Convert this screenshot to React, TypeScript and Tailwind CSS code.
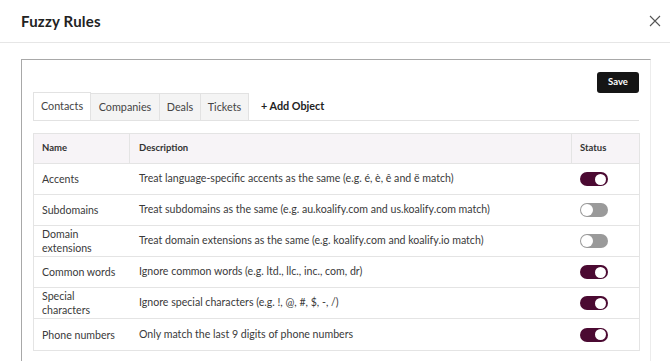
import React from "react";

const rows = [
  { name: "Accents", desc: "Treat language-specific accents as the same (e.g. é, è, ê and ë match)", on: true },
  { name: "Subdomains", desc: "Treat subdomains as the same (e.g. au.koalify.com and us.koalify.com match)", on: false },
  { name: "Domain extensions", desc: "Treat domain extensions as the same (e.g. koalify.com and koalify.io match)", on: false },
  { name: "Common words", desc: "Ignore common words (e.g. ltd., llc., inc., com, dr)", on: true },
  { name: "Special characters", desc: "Ignore special characters (e.g. !, @, #, $, -, /)", on: true },
  { name: "Phone numbers", desc: "Only match the last 9 digits of phone numbers", on: true },
];

function Toggle({ on }: { on: boolean }) {
  return on ? (
    <div className="w-[28px] h-[14px] rounded-full bg-[#4b0a32] flex items-center justify-end pr-[2px]">
      <div className="w-[11px] h-[11px] rounded-full bg-white" />
    </div>
  ) : (
    <div className="w-[28px] h-[14px] rounded-full bg-[#9a9a9a] flex items-center justify-start pl-[1px]">
      <div className="w-[12px] h-[12px] rounded-full bg-white" />
    </div>
  );
}

export default function App() {
  return (
    <div className="w-[670px] h-[361px] overflow-hidden bg-white text-[#333] font-['Lato',sans-serif]">
      <div className="h-[43px] flex items-center justify-between pl-[21px] pr-[9px] border-b border-[#e6e6e6]">
        <div className="text-[15px] font-bold text-[#222] tracking-[0.2px]">Fuzzy Rules</div>
        <svg width="12" height="12" viewBox="0 0 12 12">
          <path d="M1 1 L11 11 M11 1 L1 11" stroke="#555" strokeWidth="1.1" />
        </svg>
      </div>
      <div className="pt-[16px] pl-[21px] pr-[19px]">
        <div className="border-l border-t border-[#a8a8a8] border-r-[#ececec] border-r h-[320px] pl-[11px] pr-[11px] pt-[12px]">
          <div className="flex justify-end">
            <button className="w-[42px] h-[21px] bg-[#151515] text-white rounded-[3px] text-[9.5px] font-bold">Save</button>
          </div>
          <div className="flex items-end border-b border-[#e2e2e2] h-[28px] text-[10.8px]">
            <div className="w-[58px] h-[28px] flex items-center justify-center border border-b-0 border-[#e2e2e2] bg-white text-[#444]">Contacts</div>
            <div className="w-[69px] h-[27px] flex items-center justify-center border-t border-r border-[#e2e2e2] bg-[#f4f4f4] text-[#444]">Companies</div>
            <div className="w-[41px] h-[27px] flex items-center justify-center border-t border-r border-[#e2e2e2] bg-[#f4f4f4] text-[#444]">Deals</div>
            <div className="w-[48px] h-[27px] flex items-center justify-center border-t border-r border-[#e2e2e2] bg-[#f4f4f4] text-[#444]">Tickets</div>
            <div className="h-[27px] pl-[12px] flex items-center font-bold text-[#222]">+ Add Object</div>
          </div>
          <div className="mt-[12px] border border-[#e4e4e4] w-[607px]">
            <div className="grid grid-cols-[96px_442px_1fr] h-[30px] bg-[#f7f4f7] border-b border-[#e4e4e4] text-[9.5px] font-bold text-[#333]">
              <div className="flex items-center pl-[8px] border-r border-[#e4e4e4]">Name</div>
              <div className="flex items-center pl-[9px] border-r border-[#e4e4e4]">Description</div>
              <div className="flex items-center pl-[8px]">Status</div>
            </div>
            {rows.map((r, i) => (
              <div
                key={r.name}
                className={`grid grid-cols-[96px_442px_1fr] h-[31px] text-[10.6px] text-[#3a3a3a] ${i < rows.length - 1 ? "border-b border-[#e4e4e4]" : ""}`}
              >
                <div className="flex items-center pl-[8px] pr-[6px] leading-[14px]">{r.name}</div>
                <div className="flex items-center pl-[9px]">{r.desc}</div>
                <div className="flex items-center pl-[8px]">
                  <Toggle on={r.on} />
                </div>
              </div>
            ))}
          </div>
        </div>
      </div>
    </div>
  );
}
